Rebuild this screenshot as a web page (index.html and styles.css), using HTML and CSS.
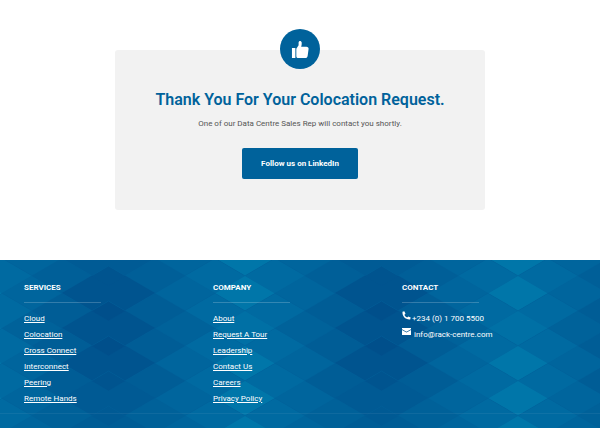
FILE: index.html
```html
<!DOCTYPE html>
<html lang="en">
<head>
<meta charset="utf-8">
<meta name="viewport" content="width=device-width, initial-scale=1">
<title>Thank You</title>
<link rel="stylesheet" href="styles.css">
</head>
<body>
<main class="main">
  <section class="card">
    <div class="badge">
      <svg viewBox="0 0 20 20" width="19" height="19" aria-hidden="true"><path fill="#fff" d="M1 8.500h3.600V19H1zM5.600 9.200 8 5.400V2.600C8 .5 11 .3 11.300 2.800c.1 1.600-.2 3.200-.6 4.400h5.500c1.500 0 2.500 1 2.300 2.400l-1 7.200c-.2 1.300-1.100 2.200-2.400 2.200H7.800c-1.200 0-2.200-.8-2.200-2z"/></svg>
    </div>
    <h1 class="title">Thank You For Your Colocation Request.</h1>
    <p class="text">One of our Data Centre Sales Rep will contact you shortly.</p>
    <a class="button" href="#">Follow us on LinkedIn</a>
  </section>
</main>
<footer class="footer">
  <svg class="pattern" viewBox="0 0 600 168" preserveAspectRatio="xMinYMin slice" aria-hidden="true">
    <defs>
      <path id="d" d="M0-17.500 30 0 0 17.500-30 0z"/>
      <clipPath id="c"><rect x="0" y="-20" width="137" height="220"/></clipPath>
      <g id="half" clip-path="url(#c)">
        <rect y="-20" width="137" height="220" fill="#00619a"/>
        <g fill="#0076a9"><use href="#d" y="-2"/><use href="#d" y="33"/><use href="#d" y="68" fill="#0070a5"/><use href="#d" y="103"/><use href="#d" y="138"/><use href="#d" y="173"/></g>
        <g fill="#006aa1"><use href="#d" x="30" y="-19"/><use href="#d" x="30" y="16"/><use href="#d" x="30" y="51"/><use href="#d" x="30" y="86"/><use href="#d" x="30" y="121"/><use href="#d" x="30" y="156"/></g>
        <g fill="#00659d"><use href="#d" x="60" y="-2"/><use href="#d" x="60" y="33"/><use href="#d" x="60" y="68" fill="#00629a"/><use href="#d" x="60" y="103"/><use href="#d" x="60" y="138"/><use href="#d" x="60" y="173"/></g>
        <g fill="#005d96"><use href="#d" x="90" y="-19"/><use href="#d" x="90" y="16" fill="#005f98"/><use href="#d" x="90" y="51"/><use href="#d" x="90" y="86"/><use href="#d" x="90" y="121"/><use href="#d" x="90" y="156" fill="#006199"/></g>
        <g fill="#00548f"><use href="#d" x="120" y="-2" fill="#005b95"/><use href="#d" x="120" y="33"/><use href="#d" x="120" y="68"/><use href="#d" x="120" y="103"/><use href="#d" x="120" y="138" fill="#005a94"/><use href="#d" x="120" y="173" fill="#005d96"/></g>
        <g fill="#00548f"><use href="#d" x="150" y="16"/><use href="#d" x="150" y="51" fill="#004f8b"/><use href="#d" x="150" y="86" fill="#004f8b"/><use href="#d" x="150" y="121"/><use href="#d" x="150" y="156" fill="#005a94"/></g>
      </g>
      <g id="tile"><use href="#half"/><use href="#half" transform="scale(-1 1)"/></g>
    </defs>
    <use href="#tile" x="-28"/><use href="#tile" x="245"/><use href="#tile" x="518"/>
  </svg>
  <div class="columns">
    <nav class="column" aria-labelledby="services">
      <h2 class="heading" id="services">SERVICES</h2>
      <ul class="list">
        <li><a href="#">Cloud</a></li>
        <li><a href="#">Colocation</a></li>
        <li><a href="#">Cross Connect</a></li>
        <li><a href="#">Interconnect</a></li>
        <li><a href="#">Peering</a></li>
        <li><a href="#">Remote Hands</a></li>
      </ul>
    </nav>
    <nav class="column" aria-labelledby="company">
      <h2 class="heading" id="company">COMPANY</h2>
      <ul class="list">
        <li><a href="#">About</a></li>
        <li><a href="#">Request A Tour</a></li>
        <li><a href="#">Leadership</a></li>
        <li><a href="#">Contact Us</a></li>
        <li><a href="#">Careers</a></li>
        <li><a href="#">Privacy Policy</a></li>
      </ul>
    </nav>
    <section class="column">
      <h2 class="heading">CONTACT</h2>
      <ul class="list contact">
        <li><svg viewBox="0 0 9 9" width="9" height="9" aria-hidden="true"><path fill="#fff" d="M.5.8 2.300.2 3.500 2.700 2.400 3.700C3 5 3.900 5.900 5.200 6.600l1-1.200 2.500 1.200-.5 1.900C3.700 9 0 5.200.5.800z"/></svg><a href="#">+234 (0) 1 700 5500</a></li>
        <li class="mail"><svg viewBox="0 0 9 9" width="9" height="9" aria-hidden="true"><path fill="#fff" d="M0 1h9v1.200L4.500 4.700 0 2.200zM0 3.100l4.500 2.500L9 3.100V8H0z"/></svg><a href="#">info@rack-centre.com</a></li>
      </ul>
    </section>
  </div>
  <div class="bottom"></div>
</footer>
</body>
</html>
```
FILE: styles.css
```css
* {
  box-sizing: border-box;
}

body {
  margin: 0;
  min-height: 100vh;
  display: flex;
  flex-direction: column;
  background: #fff;
  color: #555;
  font-family: Roboto, "Liberation Sans", sans-serif;
  font-size: 8px;
}

.main {
  padding: 50px 16px;
}

.card {
  position: relative;
  display: flex;
  flex-direction: column;
  align-items: center;
  max-width: 370px;
  margin: 0 auto;
  padding: 38px 16px 31px;
  border-radius: 3px;
  background: #f2f2f2;
  text-align: center;
}

.badge {
  position: absolute;
  top: -21px;
  left: 50%;
  display: flex;
  align-items: center;
  justify-content: center;
  width: 40px;
  height: 40px;
  margin-left: -20px;
  border-radius: 50%;
  background: #00629b;
}

.title {
  margin: 0;
  color: #00629b;
  font-size: 16px;
  line-height: 24px;
  font-weight: 600;
}

.text {
  margin: 4px 0 16px;
  font-size: 8px;
  line-height: 16px;
}

.button {
  padding: 0 19px;
  border-radius: 2px;
  background: #00629b;
  color: #fff;
  font-weight: 700;
  line-height: 31px;
  text-decoration: none;
}

.footer {
  position: relative;
  flex: 1;
  overflow: hidden;
  background: #00619a;
  color: #fff;
}

.pattern {
  position: absolute;
  inset: 0;
  width: 100%;
  height: 100%;
}

.columns {
  position: relative;
  display: grid;
  grid-template-columns: repeat(3, 1fr);
  padding: 20px 9px 6px 24px;
}

.heading {
  width: 41%;
  margin: 0 0 8px;
  padding-bottom: 6px;
  border-bottom: 1px solid rgba(255, 255, 255, 0.2);
  font-size: 8px;
  line-height: 16px;
  font-weight: 700;
}

.list {
  margin: 0;
  padding: 0;
  list-style: none;
  line-height: 16px;
}

.list a {
  color: #fff;
  text-underline-offset: 1px;
}

.contact li {
  display: flex;
  gap: 1px;
}

.contact a {
  text-decoration: none;
}

.contact .mail {
  gap: 3px;
}

.bottom {
  position: relative;
  border-top: 1px solid rgba(255, 255, 255, 0.06);
}
```
